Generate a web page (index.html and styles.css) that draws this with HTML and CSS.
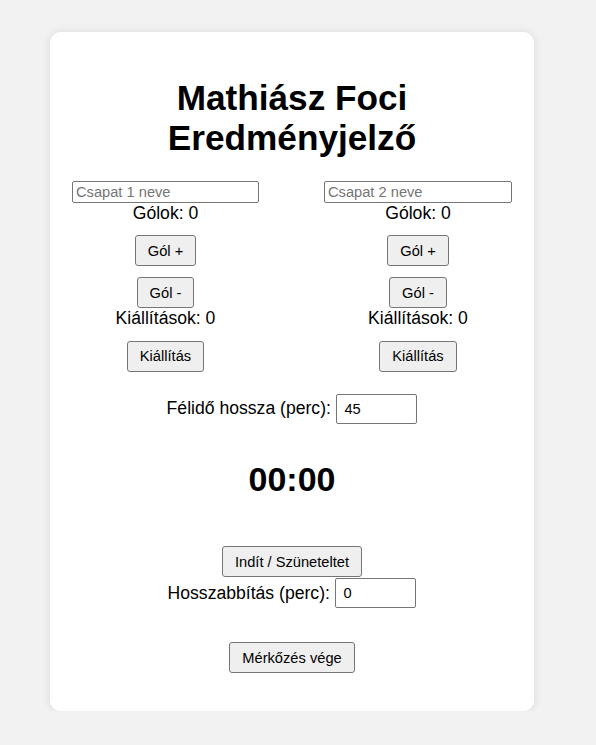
FILE: index.html
```html
<!DOCTYPE html>
<html lang="hu">
<head>
<meta charset="utf-8">
<title>Mathiász Foci Eredményjelző</title>
<link rel="stylesheet" href="styles.css">
</head>
<body>
<div class="page">
  <main class="card">
    <h1 class="title">Mathiász Foci Eredményjelző</h1>
    <div class="teams">
      <div class="team">
        <input class="team-name" type="text" placeholder="Csapat 1 neve">
        <div class="stat">Gólok: <span>0</span></div>
        <button class="btn btn-first">Gól +</button>
        <button class="btn btn-second">Gól -</button>
        <div class="stat">Kiállítások: <span>0</span></div>
        <button class="btn btn-first">Kiállítás</button>
      </div>
      <div class="team team-right">
        <input class="team-name" type="text" placeholder="Csapat 2 neve">
        <div class="stat">Gólok: <span>0</span></div>
        <button class="btn btn-first">Gól +</button>
        <button class="btn btn-second">Gól -</button>
        <div class="stat">Kiállítások: <span>0</span></div>
        <button class="btn btn-first">Kiállítás</button>
      </div>
    </div>
    <div class="field half-field">
      <label class="field-label" for="half">Félidő hossza (perc):</label>
      <input class="num-input" id="half" type="number" value="45">
    </div>
    <div class="timer">00:00</div>
    <div class="controls">
      <button class="btn">Indít / Szüneteltet</button>
      <div class="field">
        <label class="field-label" for="extra">Hosszabbítás (perc):</label>
        <input class="num-input" id="extra" type="number" value="0">
      </div>
      <button class="btn btn-end">Mérkőzés vége</button>
    </div>
  </main>
</div>
</body>
</html>
```
FILE: styles.css
```css
html, body {
  margin: 0;
  padding: 0;
}

body {
  background: #f2f2f2;
  font-family: "Liberation Sans", Arial, sans-serif;
  font-size: 17.6px;
  color: #000;
}

.page {
  display: flex;
  justify-content: center;
  padding: 32px 12px 0 0;
}

.card {
  box-sizing: border-box;
  width: 484px;
  background: #fff;
  border-radius: 11px;
  box-shadow: 0 0 10px rgba(0, 0, 0, 0.1);
  padding: 22px 22px 21px;
  text-align: center;
}

.title {
  font-size: 35.2px;
  font-weight: bold;
  margin: 23.6px 0 22.6px;
  line-height: 40.45px;
}

.teams {
  display: flex;
  justify-content: space-between;
}

.team {
  width: 187px;
  display: flex;
  flex-direction: column;
  align-items: center;
}

.team-right {
  width: 188px;
}

.team-name {
  box-sizing: border-box;
  width: 100%;
  height: 22px;
  margin: 0;
  padding: 1px 3px;
  border: 1px solid #767676;
  border-radius: 2px;
  font-family: "Liberation Sans", Arial, sans-serif;
  font-size: 14.67px;
  color: #000;
  background: #fff;
}

.team-name::placeholder {
  color: #757575;
}

.stat {
  line-height: 20.2px;
}

.btn {
  box-sizing: border-box;
  height: 31px;
  padding: 0 12px;
  margin: 0;
  border: 1px solid #767676;
  border-radius: 3px;
  background: #efefef;
  font-family: "Liberation Sans", Arial, sans-serif;
  font-size: 14.67px;
  color: #000;
}

.btn-first {
  margin-top: 12px;
}

.btn-second {
  margin-top: 11px;
}

.field {
  display: flex;
  justify-content: center;
  align-items: center;
  gap: 5.5px;
}

.half-field {
  margin-top: 22px;
}

.field-label {
  line-height: 20.2px;
}

.num-input {
  box-sizing: border-box;
  width: 81px;
  height: 30px;
  margin: 0;
  padding: 0 7px;
  border: 1px solid #767676;
  border-radius: 2px;
  font-family: "Liberation Sans", Arial, sans-serif;
  font-size: 14.67px;
  color: #000;
  background: #fff;
  -moz-appearance: textfield;
}

.num-input::-webkit-outer-spin-button,
.num-input::-webkit-inner-spin-button {
  -webkit-appearance: none;
  margin: 0;
}

.timer {
  font-size: 34px;
  font-weight: bold;
  line-height: 38px;
  margin: 36px 0 48.5px;
}

.controls {
  display: flex;
  flex-direction: column;
  align-items: center;
}

.controls .field {
  margin-top: 1px;
}

.btn-end {
  margin: 34px 0 16.7px;
}
```
